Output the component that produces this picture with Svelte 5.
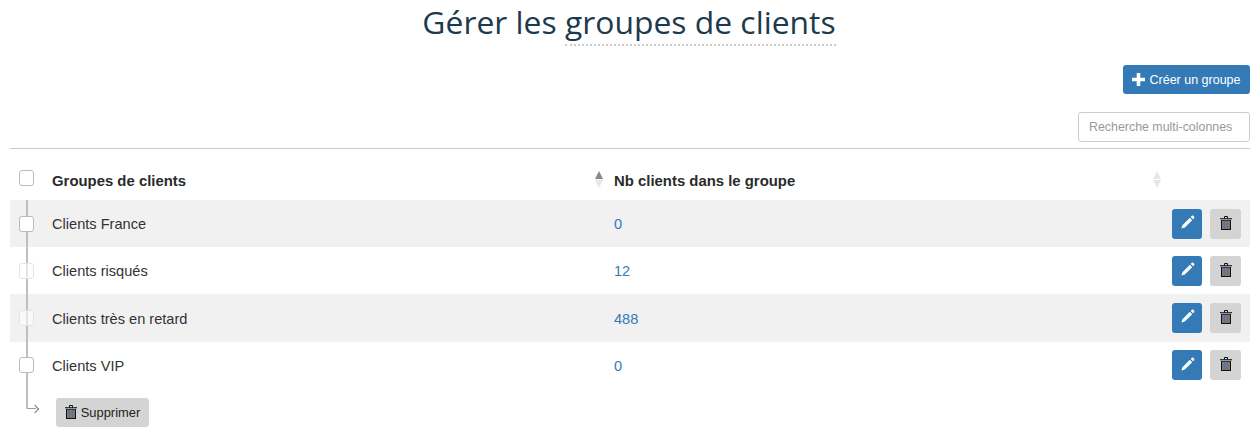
<script>
  const groups = [
    { name: 'Clients France', count: 0, faded: false },
    { name: 'Clients risqués', count: 12, faded: true },
    { name: 'Clients très en retard', count: 488, faded: true },
    { name: 'Clients VIP', count: 0, faded: false },
  ];
</script>

<style>
  :global(body) {
    background: #fff;
    font-family: "Liberation Sans", Arial, sans-serif;
    font-size: 14.6px;
    color: #333;
  }

  .page {
    padding: 0 10px;
    height: 435px;
    box-sizing: border-box;
    overflow: hidden;
    position: relative;
  }

  h1 {
    margin: 0;
    padding-right: 2px;
    height: 64px;
    box-sizing: border-box;
    text-align: center;
    font-family: "Open Sans", sans-serif;
    font-size: 31.85px;
    font-weight: 400;
    line-height: 44px;
    color: #1d3b4d;
  }

  h1 span {
    display: inline-block;
    height: 44px;
    border-bottom: 2px dotted #ccc;
  }

  .actions {
    display: flex;
    justify-content: flex-end;
    height: 48px;
    padding-top: 1px;
    box-sizing: border-box;
  }

  .btn {
    display: inline-flex;
    align-items: center;
    justify-content: center;
    border: 0;
    border-radius: 3px;
    font-family: inherit;
    font-size: 12.5px;
    padding: 0;
  }

  .btn-primary {
    background: #337ab7;
    color: #fff;
  }

  .btn-grey {
    background: #d4d4d4;
    color: #222;
  }

  .create {
    width: 127px;
    height: 29px;
    gap: 4px;
  }

  .search-row {
    display: flex;
    justify-content: flex-end;
    height: 36px;
    border-bottom: 1px solid #ccc;
  }

  .search {
    width: 172px;
    height: 30px;
    box-sizing: border-box;
    border: 1px solid #ccc;
    border-radius: 3px;
    padding: 0 10px;
    font-family: inherit;
    font-size: 12.4px;
  }

  .search::placeholder {
    color: #999;
    opacity: 1;
  }

  .row {
    display: grid;
    grid-template-columns: 42px 562px 1fr 78px;
    align-items: center;
    height: 47.2px;
  }

  .name,
  .count {
    padding-top: 1.4px;
  }

  .head {
    height: 51px;
    font-size: 14.9px;
    font-weight: 700;
    color: #2b2b2b;
  }

  .head > div {
    padding-top: 12px;
  }

  .head .check-cell {
    padding-top: 0;
  }

  .row:nth-child(even) {
    background: #f1f1f1;
  }

  .check-cell {
    padding-left: 9px;
    position: relative;
    z-index: 1;
  }

  .check {
    display: block;
    width: 15px;
    height: 16px;
    box-sizing: border-box;
    border: 1px solid #bbb;
    border-radius: 3px;
    background: #fff;
  }

  .head .check {
    margin-top: 6px;
  }

  .check.faded {
    border-color: #e4e4e4;
    background: rgba(255, 255, 255, 0.6);
  }

  .sortable {
    position: relative;
  }

  .arrows {
    position: absolute;
    top: 10px;
    display: flex;
    flex-direction: column;
    gap: 1px;
  }

  .arrows i {
    width: 0;
    height: 0;
    border-left: 4.5px solid transparent;
    border-right: 4.5px solid transparent;
  }

  .up { border-bottom: 8px solid #e6e6e6; }
  .down { border-top: 8px solid #e6e6e6; }
  .up.on { border-bottom-color: #8a8a8a; }

  .count {
    color: #337ab7;
  }

  .row-actions {
    display: flex;
    gap: 8px;
  }

  .row-actions .btn {
    width: 30px;
    height: 30px;
    padding-bottom: 2px;
  }

  .row-actions .btn-grey {
    width: 31px;
  }

  .footer {
    padding: 9px 0 0 46px;
  }

  .remove {
    width: 93px;
    height: 29px;
    gap: 4px;
    font-size: 12.9px;
  }

  .tree {
    position: absolute;
    left: 26px;
    top: 200px;
    width: 12px;
    height: 209px;
    border-left: 2px solid #bfbfbf;
    box-sizing: border-box;
  }

  .tree::after {
    content: "";
    position: absolute;
    left: 0;
    bottom: 0;
    width: 8px;
    border-bottom: 1px solid #999;
  }

  .tree::before {
    content: "";
    position: absolute;
    right: 0;
    bottom: -3px;
    width: 5px;
    height: 5px;
    border-top: 1px solid #777;
    border-right: 1px solid #777;
    transform: rotate(45deg);
  }
</style>

{#snippet trash()}
  <svg width="12" height="14" viewBox="0 0 12 14" aria-hidden="true">
    <path d="M4.5 2.5V.5h3v2" fill="none" stroke="#111" />
    <path d="M0 2.2h12v1.1H0z" fill="#111" />
    <path d="M1 4h10v10H1z" fill="#111" />
    <path d="M2 4.7h8V13H2z" fill="#2f7fd0" />
    <path d="M2.4 4.7h1.3V13H2.4zM5.3 4.7h1.4V13H5.3zM8.3 4.7h1.3V13H8.3z" fill="#b5712f" />
  </svg>
{/snippet}

<div class="page">
  <h1>Gérer les <span>groupes de clients</span></h1>

  <div class="actions">
    <button class="btn btn-primary create">
      <svg width="13" height="13" viewBox="0 0 13 13" aria-hidden="true">
        <path d="M4.7 0h3.6v4.7H13v3.6H8.3V13H4.7V8.3H0V4.7h4.7z" fill="#fff" />
      </svg>
      Créer un groupe
    </button>
  </div>

  <div class="search-row">
    <input class="search" placeholder="Recherche multi-colonnes" />
  </div>

  <div class="table">
    <div class="row head">
      <div class="check-cell"><span class="check"></span></div>
      <div class="sortable">
        Groupes de clients
        <span class="arrows" style="left: 543px"><i class="up on"></i><i class="down"></i></span>
      </div>
      <div class="sortable">
        Nb clients dans le groupe
        <span class="arrows" style="left: 539px"><i class="up"></i><i class="down"></i></span>
      </div>
      <div></div>
    </div>
    {#each groups as group}
      <div class="row">
        <div class="check-cell"><span class="check" class:faded={group.faded}></span></div>
        <div class="name">{group.name}</div>
        <div class="count">{group.count}</div>
        <div class="row-actions">
          <button class="btn btn-primary" aria-label="Modifier">
            <svg width="15" height="15" viewBox="0 0 14 14" aria-hidden="true">
              <path d="M9.2 2.6l2.2 2.2-6.9 6.9-3.2 1 1-3.2zM10 1.8l1-1c.5-.4 1-.4 1.4 0l.8.8c.4.4.4.9 0 1.4l-1 1z" fill="#fff" />
            </svg>
          </button>
          <button class="btn btn-grey" aria-label="Supprimer">
            {@render trash()}
          </button>
        </div>
      </div>
    {/each}
  </div>

  <div class="footer">
    <button class="btn btn-grey remove">
      {@render trash()}
      Supprimer
    </button>
  </div>

  <div class="tree"></div>
</div>
